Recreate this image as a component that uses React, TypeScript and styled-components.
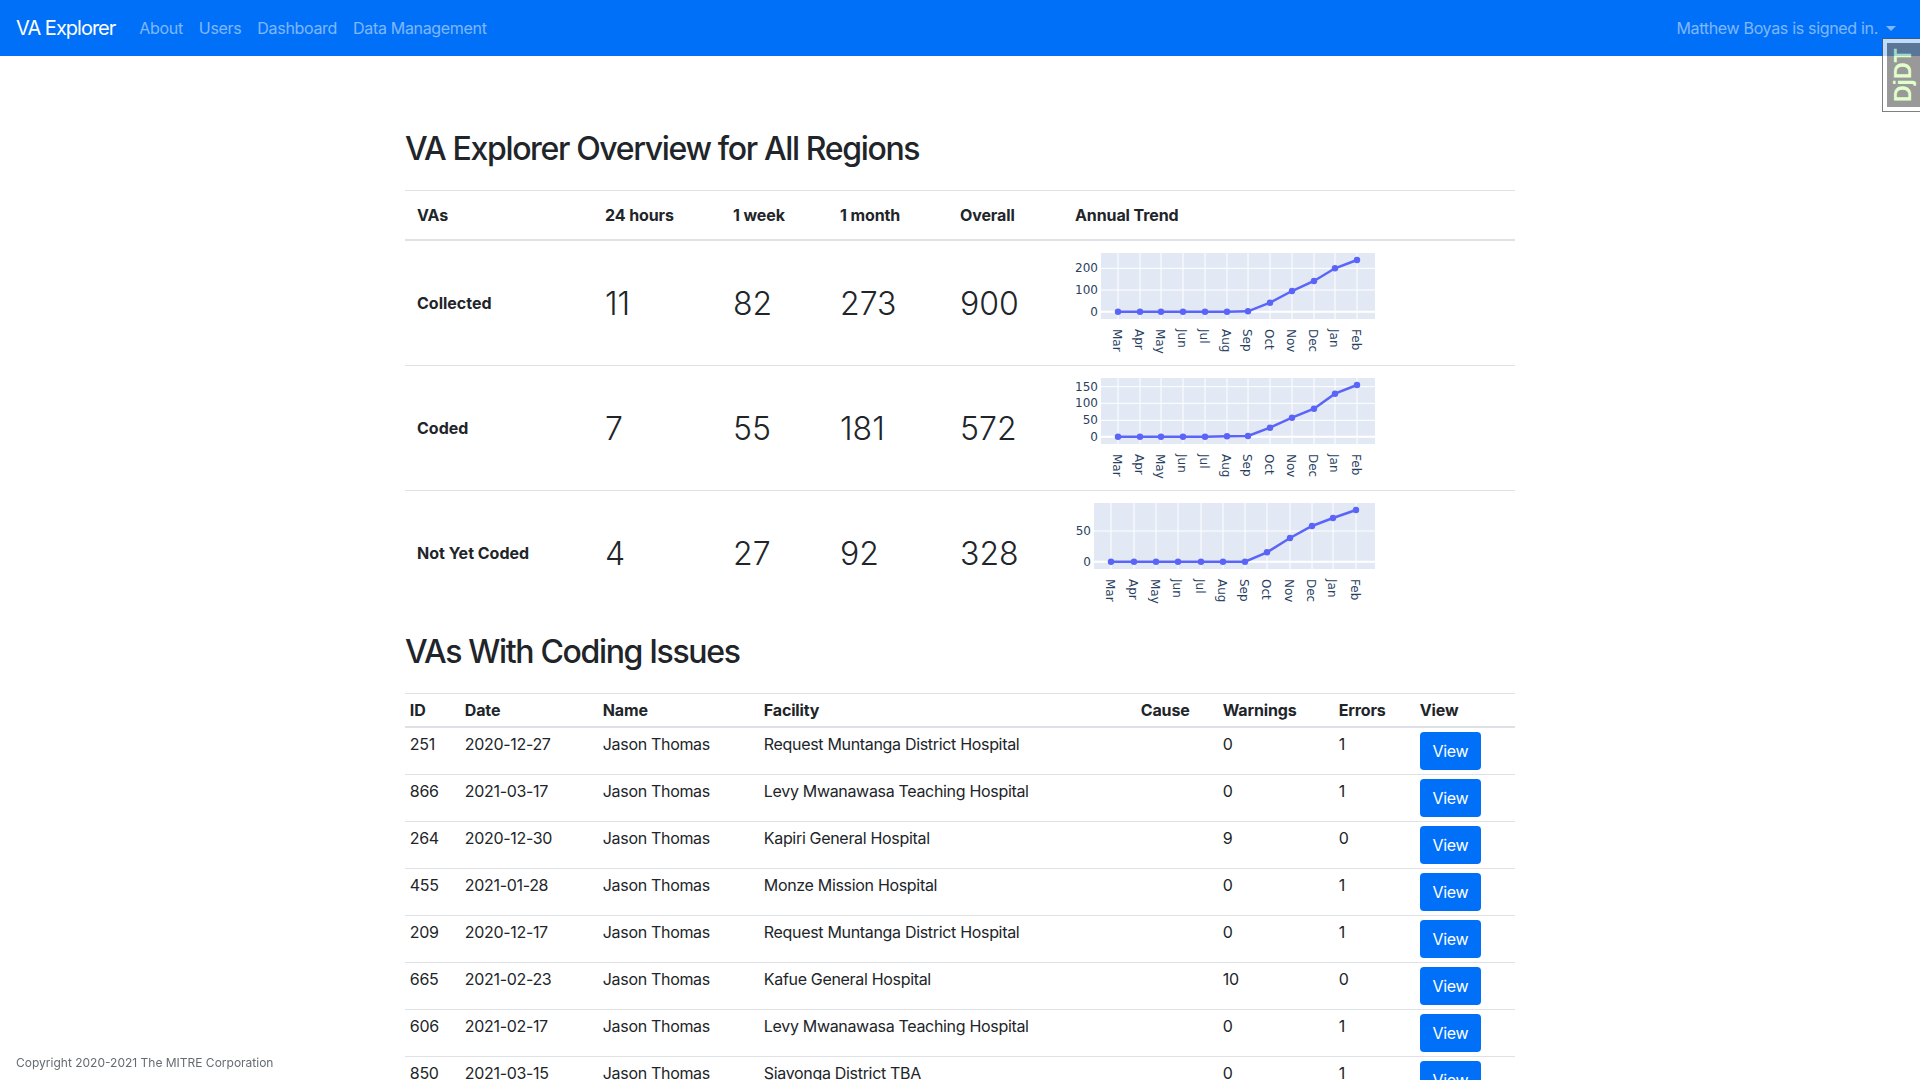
import React from 'react';
import styled, { createGlobalStyle } from 'styled-components';

const GlobalStyle = createGlobalStyle`
  html, body {
    margin: 0;
    height: 100%;
    overflow: hidden;
    background: #fff;
  }
  body {
    font-family: Inter, "Liberation Sans", sans-serif;
    font-size: 16px;
    line-height: 1.5;
    letter-spacing: -0.32px;
    color: #212529;
  }
  * { box-sizing: border-box; }
`;

const Navbar = styled.nav`
  height: 56px;
  background: #0070f9;
  display: flex;
  align-items: center;
  padding: 0 16px;
`;

const Brand = styled.a`
  color: #fff;
  font-size: 20px;
  letter-spacing: -1px;
  margin-right: 16px;
`;

const NavLinks = styled.div`
  display: flex;
  flex: 1;
`;

const NavLink = styled.a`
  color: rgba(255, 255, 255, 0.5);
  padding: 0 8px;
`;

const Caret = styled.span`
  display: inline-block;
  margin-left: 8px;
  vertical-align: 3px;
  border-top: 5px solid rgba(255, 255, 255, 0.5);
  border-left: 5px solid transparent;
  border-right: 5px solid transparent;
`;

const DebugHandle = styled.div`
  position: fixed;
  top: 38px;
  right: 0;
  width: 38px;
  height: 74px;
  background: #fff;
  border: 1px solid #555;
  border-right: 0;
  padding: 4px 0 4px 4px;
  opacity: 0.75;
`;

const DebugLabel = styled.div`
  width: 100%;
  height: 100%;
  background: #777;
  color: #d6ffb8;
  font-family: "Liberation Sans", sans-serif;
  font-weight: 700;
  font-size: 23px;
  letter-spacing: 0;
  line-height: 33px;
  writing-mode: vertical-rl;
  transform: rotate(180deg);
  text-align: center;
`;

const Container = styled.main`
  width: 1110px;
  margin: 0 auto;
  padding-top: 74px;
`;

const Heading = styled.h2`
  font-size: 32px;
  font-weight: 500;
  line-height: 38px;
  letter-spacing: -1.35px;
  margin: 0 0 22px;
`;

const OverviewTable = styled.table`
  width: 100%;
  table-layout: fixed;
  border-collapse: collapse;
  margin-bottom: 18px;

  th {
    height: 49px;
    padding: 0 12px;
    text-align: left;
    font-weight: 700;
    letter-spacing: -0.1px;
    border-top: 1px solid #dee2e6;
    border-bottom: 2px solid #dee2e6;
  }

  td {
    height: 125px;
    padding: 0 12px;
    letter-spacing: 0;
    border-bottom: 1px solid #dee2e6;
  }

  tr:last-child td {
    border-bottom: 0;
  }
`;

const RowLabel = styled.td`
  font-weight: 700;
`;

const Count = styled.td`
  && {
    padding-top: 2px;
  }
  font-size: 32px;
  font-weight: 300;
`;

const ChartCell = styled.td`
  && {
    padding: 0;
    vertical-align: top;
  }
`;

const ChartSvg = styled.svg`
  display: block;
  letter-spacing: 0;
`;

const IssuesTable = styled.table`
  width: 100%;
  table-layout: fixed;
  border-collapse: collapse;

  th, td {
    padding: 4px 4.8px;
    text-align: left;
    vertical-align: top;
    border-top: 1px solid #dee2e6;
  }

  th {
    font-weight: 700;
    letter-spacing: -0.15px;
    border-bottom: 2px solid #dee2e6;
  }
`;

const ViewButton = styled.a`
  display: block;
  width: 61px;
  height: 38px;
  line-height: 38px;
  text-align: center;
  color: #fff;
  background: #0070f9;
  border-radius: 4px;
`;

const Footer = styled.footer`
  position: fixed;
  left: 16px;
  bottom: 8px;
  font-size: 12px;
  letter-spacing: 0;
  color: #666b70;
`;

const MONTHS = ['Mar', 'Apr', 'May', 'Jun', 'Jul', 'Aug', 'Sep', 'Oct', 'Nov', 'Dec', 'Jan', 'Feb'];

interface TrendProps {
  left: number;
  ticks: { label: string; y: number }[];
  xs: number[];
  ys: number[];
}

// coordinates are measured inside a 312x124 box at the top left of the cell
const TrendChart: React.FC<TrendProps> = ({ left, ticks, xs, ys }) => (
  <ChartSvg width={312} height={124}>
    <rect x={left} y={12} width={312 - left} height={66} fill="#e2e9f4" />
    {xs.map(x => (
      <line key={x} x1={x} x2={x} y1={12} y2={78} stroke="#fff" strokeWidth={1} />
    ))}
    {ticks.map((t, i) => (
      <line key={t.label} x1={left} x2={312} y1={t.y} y2={t.y} stroke="#fff" strokeWidth={i === 0 ? 2 : 1} />
    ))}
    <polyline points={xs.map((x, i) => `${x},${ys[i]}`).join(' ')} fill="none" stroke="#5a64f8" strokeWidth={2.5} />
    {xs.map((x, i) => (
      <circle key={x} cx={x} cy={ys[i]} r={3.2} fill="#5a64f8" />
    ))}
    {ticks.map(t => (
      <text key={t.label} x={left - 3} y={t.y + 4} textAnchor="end" fontFamily="DejaVu Sans" fontSize={12} fill="#2a3f5f">
        {t.label}
      </text>
    ))}
    {xs.map((x, i) => (
      <text
        key={x}
        transform={`translate(${x - 5.5} 88) rotate(90)`}
        fontFamily="DejaVu Sans"
        fontSize={12}
        fill="#2a3f5f"
      >
        {MONTHS[i]}
      </text>
    ))}
  </ChartSvg>
);

const CHARTS: TrendProps[] = [
  {
    left: 38,
    ticks: [
      { label: '0', y: 70.7 },
      { label: '100', y: 49 },
      { label: '200', y: 27.3 },
    ],
    xs: [55, 77, 98, 120, 142, 164, 185, 207, 229, 251, 272, 294],
    ys: [70.7, 70.7, 70.7, 70.7, 70.7, 70.7, 70.3, 61.7, 50, 40, 27.3, 19],
  },
  {
    left: 38,
    ticks: [
      { label: '0', y: 70.7 },
      { label: '50', y: 54.3 },
      { label: '100', y: 37.3 },
      { label: '150', y: 20.7 },
    ],
    xs: [55, 77, 98, 120, 142, 164, 185, 207, 229, 251, 272, 294],
    ys: [70.7, 70.7, 70.7, 70.7, 70.7, 70.3, 70, 61.7, 51.7, 42.7, 27.7, 19],
  },
  {
    left: 31,
    ticks: [
      { label: '0', y: 70.7 },
      { label: '50', y: 40 },
    ],
    xs: [48, 71, 93, 115, 138, 160, 182, 204, 227, 249, 270, 293],
    ys: [70.7, 70.7, 70.7, 70.7, 70.7, 70.7, 70.7, 61.3, 47, 35, 27, 19],
  },
];

const OVERVIEW = [
  { label: 'Collected', values: ['11', '82', '273', '900'] },
  { label: 'Coded', values: ['7', '55', '181', '572'] },
  { label: 'Not Yet Coded', values: ['4', '27', '92', '328'] },
];

const ISSUES = [
  ['251', '2020-12-27', 'Request Muntanga District Hospital', '0', '1'],
  ['866', '2021-03-17', 'Levy Mwanawasa Teaching Hospital', '0', '1'],
  ['264', '2020-12-30', 'Kapiri General Hospital', '9', '0'],
  ['455', '2021-01-28', 'Monze Mission Hospital', '0', '1'],
  ['209', '2020-12-17', 'Request Muntanga District Hospital', '0', '1'],
  ['665', '2021-02-23', 'Kafue General Hospital', '10', '0'],
  ['606', '2021-02-17', 'Levy Mwanawasa Teaching Hospital', '0', '1'],
  ['850', '2021-03-15', 'Siavonga District TBA', '0', '1'],
];

export default function App() {
  return (
    <>
      <GlobalStyle />
      <Navbar>
        <Brand>VA Explorer</Brand>
        <NavLinks>
          <NavLink>About</NavLink>
          <NavLink>Users</NavLink>
          <NavLink>Dashboard</NavLink>
          <NavLink>Data Management</NavLink>
        </NavLinks>
        <NavLink>
          Matthew Boyas is signed in.
          <Caret />
        </NavLink>
      </Navbar>
      <DebugHandle>
        <DebugLabel>DjDT</DebugLabel>
      </DebugHandle>
      <Container>
        <Heading>VA Explorer Overview for All Regions</Heading>
        <OverviewTable>
          <colgroup>
            <col width={188} />
            <col width={128} />
            <col width={107} />
            <col width={120} />
            <col width={115} />
            <col width={452} />
          </colgroup>
          <thead>
            <tr>
              <th>VAs</th>
              <th>24 hours</th>
              <th>1 week</th>
              <th>1 month</th>
              <th>Overall</th>
              <th>Annual Trend</th>
            </tr>
          </thead>
          <tbody>
            {OVERVIEW.map((row, i) => (
              <tr key={row.label}>
                <RowLabel>{row.label}</RowLabel>
                {row.values.map((v, j) => (
                  <Count key={j}>{v}</Count>
                ))}
                <ChartCell>
                  <TrendChart {...CHARTS[i]} />
                </ChartCell>
              </tr>
            ))}
          </tbody>
        </OverviewTable>
        <Heading>VAs With Coding Issues</Heading>
        <IssuesTable>
          <colgroup>
            <col width={55} />
            <col width={138} />
            <col width={161} />
            <col width={377} />
            <col width={82} />
            <col width={116} />
            <col width={81} />
            <col width={100} />
          </colgroup>
          <thead>
            <tr>
              <th>ID</th>
              <th>Date</th>
              <th>Name</th>
              <th>Facility</th>
              <th>Cause</th>
              <th>Warnings</th>
              <th>Errors</th>
              <th>View</th>
            </tr>
          </thead>
          <tbody>
            {ISSUES.map(row => (
              <tr key={row[0]}>
                <td>{row[0]}</td>
                <td>{row[1]}</td>
                <td>Jason Thomas</td>
                <td>{row[2]}</td>
                <td />
                <td>{row[3]}</td>
                <td>{row[4]}</td>
                <td>
                  <ViewButton>View</ViewButton>
                </td>
              </tr>
            ))}
          </tbody>
        </IssuesTable>
      </Container>
      <Footer>Copyright 2020-2021 The MITRE Corporation</Footer>
    </>
  );
}
